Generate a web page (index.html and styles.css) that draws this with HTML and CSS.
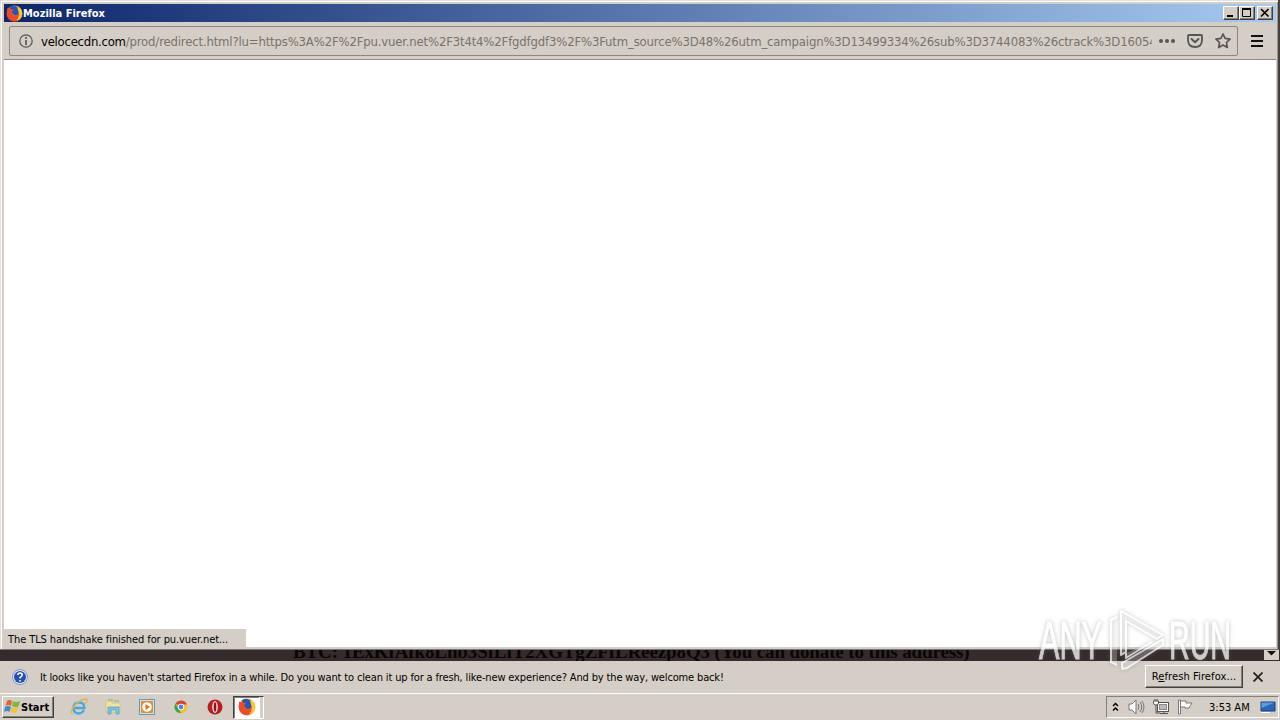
FILE: index.html
```html
<!DOCTYPE html>
<html lang="en">
<head>
    <meta charset="UTF-8">
    <meta name="viewport" content="width=device-width, initial-scale=1.0">
    <title>Mozilla Firefox</title>
    <link rel="stylesheet" href="styles.css">
</head>
<body>
    <svg class="defs" width="0" height="0">
        <defs>
            <linearGradient id="fox" x1="0" y1="1" x2="1" y2="0">
                <stop offset="0" stop-color="#e8262d"/>
                <stop offset=".5" stop-color="#ff7a18"/>
                <stop offset="1" stop-color="#ffe13a"/>
            </linearGradient>
            <symbol id="firefox" viewBox="0 0 16 16">
                <circle cx="8" cy="8" r="7.5" fill="url(#fox)"/>
                <path d="M3.500 2Q8-1 12 3L12 8Q10 11 7 9L4.500 6Z" fill="#2457b8"/>
                <path d="M1 3L3 4Q5 3 7 5L5 7Q6 11 10 10Q13 8 12 5Q15 8 12.500 12Q9 16 4 14Q0 11 1 3Z" fill="#ef4a25"/>
                <path d="M11 1.500Q17 6 14.500 11Q13 14 10 15Q14 9 11 4Z" fill="#ffc92e"/>
            </symbol>
        </defs>
    </svg>
    <div class="window">
        <div class="title-bar">
            <svg class="app-icon" width="17" height="17"><use href="#firefox"/></svg>
            <span class="title">Mozilla Firefox</span>
            <div class="controls">
                <button aria-label="Minimize"><svg width="10" height="10"><path d="M1 8H7" stroke="#000" stroke-width="2"/></svg></button>
                <button aria-label="Maximize"><svg width="10" height="10"><path d="M.5 1V8.500H8.500V1" fill="none" stroke="#000"/><path d="M0 1H9" stroke="#000" stroke-width="2"/></svg></button>
                <button class="close" aria-label="Close"><svg width="10" height="10"><path d="M1 1L8.500 8.500M8.500 1L1 8.500" stroke="#000" stroke-width="1.700"/></svg></button>
            </div>
        </div>
        <div class="toolbar">
            <div class="url-bar">
                <svg class="info" width="14" height="14"><circle cx="7" cy="7" r="6.200" fill="none" stroke="#555" stroke-width="1.200"/><path d="M7 6V11M7 3V5" stroke="#555" stroke-width="1.600"/></svg>
                <div class="url"><b>velocecdn.com</b>/prod/redirect.html?lu=https%3A%2F%2Fpu.vuer.net%2F3t4t4%2Ffgdfgdf3%2F%3Futm_source%3D48%26utm_campaign%3D13499334%26sub%3D3744083%26ctrack%3D16054</div>
                <svg class="dots" width="18" height="6" fill="#555"><circle cx="3" cy="3" r="2"/><circle cx="9" cy="3" r="2"/><circle cx="15" cy="3" r="2"/></svg>
                <svg class="pocket" width="16" height="16" fill="none" stroke="#555" stroke-width="1.800" stroke-linejoin="round" stroke-linecap="round"><path d="M2 2H14Q15 2 15 3V7Q15 14 8 14Q1 14 1 7V3Q1 2 2 2Z"/><path d="M4.500 6L8 9.300L11.500 6" stroke-width="2"/></svg>
                <svg class="star" width="16" height="16" fill="none" stroke="#555" stroke-width="1.700" stroke-linejoin="round"><path d="M8 1L10.100 5.400L15 6.100L11.500 9.500L12.300 14.500L8 12.100L3.700 14.500L4.500 9.500L1 6.100L5.900 5.400Z"/></svg>
            </div>
            <svg class="menu" width="12" height="12"><path d="M0 1H12M0 6H12M0 11H12" stroke="#111" stroke-width="2"/></svg>
        </div>
        <div class="page"></div>
        <div class="status">The TLS handshake finished for pu.vuer.net...</div>
    </div>
    <div class="behind">
        <p>BTC: 1ExKfAfk8Lnb3SfLfT2XGTgZFfLReezp8Q3 (You can donate to this address)</p>
        <div class="scroll-down"><svg width="13" height="8"><path d="M3 1H12L7.500 5.500Z" fill="#111"/></svg></div>
    </div>
    <div class="notification">
        <svg class="question" width="16" height="16"><circle cx="8" cy="8" r="7.500" fill="#dfe8f5" stroke="#8496b8"/><circle cx="8" cy="8" r="6" fill="#244fb5"/><path d="M5.800 6Q6 4 8 4Q10.200 4 10.200 6Q10 7.500 8 8.500V9.500M8 11V12.500" fill="none" stroke="#fff" stroke-width="1.600"/></svg>
        <span class="message">It looks like you haven't started Firefox in a while. Do you want to clean it up for a fresh, like-new experience? And by the way, welcome back!</span>
        <button class="refresh">R<u>e</u>fresh Firefox...</button>
        <svg class="dismiss" width="10" height="10"><path d="M.5 .5L9.500 9.500M9.500 .5L.5 9.500" stroke="#222" stroke-width="1.800"/></svg>
    </div>
    <div class="taskbar">
        <button class="start">
            <svg width="17" height="16"><path d="M3 2Q5 0 8 2L7 7Q4 5 1.500 7Z" fill="#e9632c"/><path d="M9 2Q12 4 16 2L14.500 7.500Q11 9 8 7Z" fill="#7eb83d"/><path d="M1 8Q4 6 7 8L5.500 13Q3 11 0 13Z" fill="#3a8dd0"/><path d="M8 8Q11 10 14 8.500L13 13Q9 15 6.500 13Z" fill="#f5c431"/></svg>
            <span>Start</span>
        </button>
        <div class="quick-launch">
            <svg width="18" height="18"><path d="M14 12Q12 15.500 8.500 15.500Q3.500 15 3.500 10Q3.500 4.500 9 4.500Q14.500 4.500 14.500 10H5" fill="none" stroke="#48a8dc" stroke-width="2.300"/><path d="M3 16Q-1 15 4 8Q10 1 16 1Q19 3 14 6" fill="none" stroke="#dfb44c" stroke-width="1.300"/></svg>
            <svg width="18" height="18"><path d="M2 3H7L8 5H16V14H2Z" fill="#f3e2a0" stroke="#d9c37c"/><path d="M4 2H9M10 3H15" stroke="#8cc3a3" stroke-width="1.500"/><path d="M4 16V9H15V16H12V12H7V16Z" fill="#7cc3e9" stroke="#4b9bc9" stroke-width=".7"/></svg>
            <svg width="18" height="18"><rect x="1.500" y="1.500" width="15" height="15" fill="#c9e4f5" stroke="#5b9bc8"/><rect x="3" y="3" width="12" height="12" rx="1" fill="#f18a1d"/><circle cx="9" cy="9" r="4.800" fill="#fff"/><path d="M7.500 6L12 9L7.500 12Z" fill="#e66e16"/></svg>
            <svg width="18" height="18"><circle cx="9" cy="9" r="6.500" fill="#f4c32c"/><path d="M9 9L3.400 5.500Q5.500 2.500 9 2.500Q13.300 2.500 15 6.500H9Z" fill="#df4034"/><path d="M3.400 5.500L9 14.800Q4 15.500 2.500 10Q2.300 7.500 3.400 5.500Z" fill="#35a355"/><circle cx="9" cy="9" r="3.200" fill="#fff"/><circle cx="9" cy="9" r="2.400" fill="#4388e8"/></svg>
            <svg width="18" height="18"><circle cx="9" cy="9" r="7.500" fill="#b81d22"/><ellipse cx="9" cy="9" rx="2.800" ry="6" fill="#f4dddd"/><ellipse cx="9" cy="9" rx="1.300" ry="4.800" fill="#8f1118"/></svg>
        </div>
        <div class="task"><svg width="18" height="18"><use href="#firefox"/></svg></div>
        <div class="tray">
            <svg class="chevrons" width="7" height="10" fill="none" stroke="#000" stroke-width="1.500"><path d="M1 4L3.500 1.500L6 4M1 8.500L3.500 6L6 8.500"/></svg>
            <svg class="speaker" width="17" height="16" fill="none" stroke="#777"><path d="M1 5H4L8 1V15L4 11H1Z" fill="#fff"/><path d="M10 5Q12 8 10 11M12 3Q15.500 8 12 13M14 2Q18 8 14 14"/></svg>
            <svg class="network" width="17" height="16" fill="none" stroke="#555"><rect x="4.500" y="3.500" width="11" height="9" fill="#fff"/><rect x="6.500" y="5.500" width="7" height="5" fill="#bbb" stroke="#888"/><path d="M7 14.500H15M11 12V14M3 6V14H7"/><path d="M.5 2V4Q.5 6 3 6Q5.500 6 5.500 4V2ZM2 0V2M4 0V2" fill="#fff"/></svg>
            <svg class="flag" width="17" height="16" stroke="#777"><path d="M1.500 1H3.500V15H1.500Z" fill="#fff"/><path d="M3.500 2H9V4H15Q13 7 12 9H8V8H3.500Z" fill="#fff"/></svg>
            <span class="clock">3:53 AM</span>
            <svg class="desktop" width="16" height="13"><path d="M1 1H15V10H1Z" fill="#2867ba" stroke="#163f7d"/><path d="M1.500 1.500H14.500L1.500 7Z" fill="#5a9bdf"/><path d="M1 11.500H10" stroke="#fff"/></svg>
        </div>
    </div>
    <svg class="watermark" width="210" height="74">
        <text x="4" y="53" textLength="63" lengthAdjust="spacingAndGlyphs">ANY</text>
        <g class="mark">
            <path d="M82 11L76 14V56L82 59"/>
            <path d="M91 46L86 49V5L128 29L122 33L91 15Z"/>
            <path d="M128 33L87 57V63L92 62L128 39Z"/>
            <path d="M91 47V52L117 36"/>
        </g>
        <text x="134" y="53" textLength="62" lengthAdjust="spacingAndGlyphs">RUN</text>
    </svg>
</body>
</html>
```
FILE: styles.css
```css
* {
    box-sizing: border-box;
}
body {
    margin: 0;
    width: 1280px;
    height: 720px;
    overflow: hidden;
    position: relative;
    display: flex;
    flex-direction: column;
    background-color: #d5cec7;
    color: #000;
    font-family: "DejaVu Sans Condensed", "DejaVu Sans", sans-serif;
    font-stretch: condensed;
    font-size: 11px;
}
svg {
    display: block;
    flex: none;
}
button {
    padding: 0;
    font: inherit;
    color: #000;
    background-color: #d5cec7;
    border: 1px solid;
    border-color: #fff #404040 #404040 #fff;
    box-shadow: inset -1px -1px #858078;
}
.defs {
    position: absolute;
}
.window {
    position: relative;
    height: 650px;
    flex: none;
    display: flex;
    flex-direction: column;
    padding: 4px 2px 2px 4px;
    background-color: #d5cec7;
    border-right: 2px solid #46403f;
    border-bottom: 1px solid #777;
    box-shadow: inset 1px 1px #e4dfd9, inset 2px 2px #fff, inset -1px 0 #9a958f;
}
.title-bar {
    height: 18px;
    display: flex;
    align-items: center;
    background: linear-gradient(to right, #0b266c, #a6caf0);
    color: #fff;
}
.app-icon {
    margin: 0 0 0 2px;
}
.title {
    font-weight: bold;
}
.controls {
    display: flex;
    margin-left: auto;
    padding-right: 3px;
}
.controls button {
    width: 16px;
    height: 14px;
    padding: 1px 2px;
}
.controls .close {
    margin-left: 2px;
}
.toolbar {
    height: 38px;
    display: flex;
    align-items: center;
    border-bottom: 1px solid #8e8983;
    padding-left: 5px;
}
.url-bar {
    width: 1229px;
    height: 30px;
    display: flex;
    align-items: center;
    border: 1px solid #8d8780;
    border-radius: 2px;
    padding-left: 9px;
}
.url {
    width: 1111px;
    margin-left: 8px;
    padding-top: 1px;
    overflow: hidden;
    white-space: nowrap;
    font-size: 13px;
    letter-spacing: -.17px;
    color: #77726d;
}
.url b {
    color: #000;
    font-weight: normal;
    letter-spacing: -.26px;
}
.dots {
    margin-left: 6px;
}
.pocket {
    margin-left: 11px;
}
.star {
    margin-left: 12px;
}
.menu {
    margin-left: 13px;
}
.page {
    flex: 1;
    background-color: #fff;
}
.status {
    position: absolute;
    left: 4px;
    bottom: 1px;
    width: 242px;
    height: 19px;
    padding-left: 4px;
    line-height: 21px;
    letter-spacing: -.09px;
    background-color: #d5cec7;
    white-space: nowrap;
}
.behind {
    height: 11px;
    flex: none;
    display: flex;
    justify-content: space-between;
    overflow: hidden;
    background-color: #352b2c;
}
.behind p {
    margin: -9px 0 0 293px;
    font: bold 19px/22px "Liberation Serif", serif;
    letter-spacing: -.12px;
    color: #080606;
    white-space: nowrap;
}
.scroll-down {
    width: 15px;
    height: 10px;
    margin-right: 1px;
    background-color: #d5cec7;
}
.notification {
    height: 32px;
    flex: none;
    display: flex;
    align-items: center;
    padding-left: 12px;
}
.message {
    margin-left: 12px;
    letter-spacing: -.147px;
    white-space: nowrap;
}
.refresh {
    width: 98px;
    height: 23px;
    margin: 0 10px 2px auto;
    letter-spacing: .1px;
}
.dismiss {
    margin-right: 17px;
}
.taskbar {
    height: 27px;
    flex: none;
    display: flex;
    align-items: center;
    border-top: 1px solid #fff;
    padding-left: 2px;
}
.start {
    width: 52px;
    height: 22px;
    display: flex;
    align-items: center;
    padding-left: 1px;
    font-weight: bold;
}
.quick-launch {
    display: flex;
    gap: 16px;
    margin-left: 16px;
}
.task {
    width: 31px;
    height: 23px;
    margin-left: 9px;
    padding: 1px 4px;
    background-color: #fff;
    border: 1px solid;
    border-color: #404040 #fff #fff #404040;
    box-shadow: inset -3px 0 #d5cec7, inset -4px 0 #fff, inset 1px 1px #858078;
}
.tray {
    width: 173px;
    height: 22px;
    display: flex;
    align-items: center;
    margin: 0 1px 0 auto;
    padding-left: 5px;
    border: 1px solid;
    border-color: #858078 #fff #fff #858078;
}
.speaker {
    margin-left: 9px;
}
.network {
    margin-left: 8px;
}
.flag {
    margin-left: 7px;
}
.clock {
    width: 41px;
    margin-left: 15px;
    white-space: nowrap;
}
.desktop {
    margin-left: 10px;
}
.watermark {
    position: absolute;
    left: 1035px;
    top: 606px;
    font: 53px "Liberation Sans", sans-serif;
    fill: #fff;
    stroke: #fff;
    stroke-width: 1px;
    opacity: .75;
    filter: drop-shadow(0 0 2px rgba(110, 110, 110, .6));
}
.mark {
    fill: rgba(255, 255, 255, .3);
    stroke-width: 2px;
    stroke-linejoin: round;
}
```
